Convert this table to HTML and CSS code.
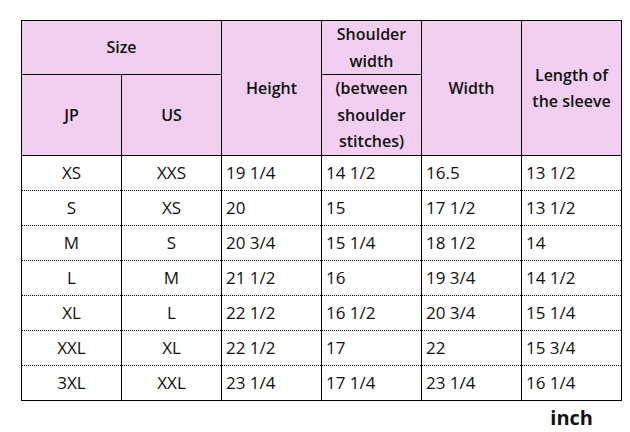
FILE: index.html
```html
<!DOCTYPE html>
<html>
<head>
<meta charset="utf-8">
<link rel="stylesheet" href="styles.css">
</head>
<body>
<div class="page">
  <table class="size-table">
    <colgroup>
      <col class="c"><col class="c"><col class="c"><col class="c"><col class="c"><col class="c">
    </colgroup>
    <thead>
      <tr class="h1">
        <th colspan="2">Size</th>
        <th rowspan="2">Height</th>
        <th class="sh-top">Shoulder<br>width</th>
        <th rowspan="2">Width</th>
        <th rowspan="2">Length of<br>the sleeve</th>
      </tr>
      <tr class="h2">
        <th>JP</th>
        <th>US</th>
        <th class="sh-bot">(between<br>shoulder<br>stitches)</th>
      </tr>
    </thead>
    <tbody>
      <tr><td class="ctr">XS</td><td class="ctr">XXS</td><td>19 1/4</td><td>14 1/2</td><td>16.5</td><td>13 1/2</td></tr>
      <tr><td class="ctr">S</td><td class="ctr">XS</td><td>20</td><td>15</td><td>17 1/2</td><td>13 1/2</td></tr>
      <tr><td class="ctr">M</td><td class="ctr">S</td><td>20 3/4</td><td>15 1/4</td><td>18 1/2</td><td>14</td></tr>
      <tr><td class="ctr">L</td><td class="ctr">M</td><td>21 1/2</td><td>16</td><td>19 3/4</td><td>14 1/2</td></tr>
      <tr><td class="ctr">XL</td><td class="ctr">L</td><td>22 1/2</td><td>16 1/2</td><td>20 3/4</td><td>15 1/4</td></tr>
      <tr><td class="ctr">XXL</td><td class="ctr">XL</td><td>22 1/2</td><td>17</td><td>22</td><td>15 3/4</td></tr>
      <tr><td class="ctr">3XL</td><td class="ctr">XXL</td><td>23 1/4</td><td>17 1/4</td><td>23 1/4</td><td>16 1/4</td></tr>
    </tbody>
  </table>
  <div class="unit">inch</div>
</div>
</body>
</html>
```
FILE: styles.css
```css
html, body {
  margin: 0;
  padding: 0;
  background: #ffffff;
}
.page {
  padding: 20px 0 0 21px;
  width: 601px;
  font-family: "Open Sans", "Noto Sans", sans-serif;
  color: #111;
}
.size-table {
  border-collapse: collapse;
  table-layout: fixed;
  width: 601px;
  font-size: 16px;
}
.size-table col.c {
  width: 100px;
}
.size-table th {
  background: #f2cef0;
  border: 1px solid #000;
  font-weight: 600;
  line-height: 26.5px;
  padding: 0;
  text-align: center;
  vertical-align: middle;
}
.size-table tr.h1 th {
  height: 53px;
}
.size-table tr.h2 th {
  height: 80px;
}
.size-table td {
  border-left: 1px solid #000;
  border-right: 1px solid #000;
  border-top: 1px dotted #000;
  border-bottom: 1px dotted #000;
  height: 34px;
  padding: 0 0 0 4px;
  font-size: 17px;
  line-height: 20px;
  vertical-align: middle;
  text-align: left;
  font-weight: 400;
}
.size-table td.ctr {
  text-align: center;
  padding: 0;
}
.size-table tbody tr:first-child td {
  border-top: 1px solid #000;
}
.size-table tbody tr:last-child td {
  border-bottom: 1px solid #000;
}
.unit {
  text-align: right;
  padding-right: 29px;
  font-size: 20px;
  font-weight: 700;
  line-height: 30px;
  margin-top: 2px;
}
```
